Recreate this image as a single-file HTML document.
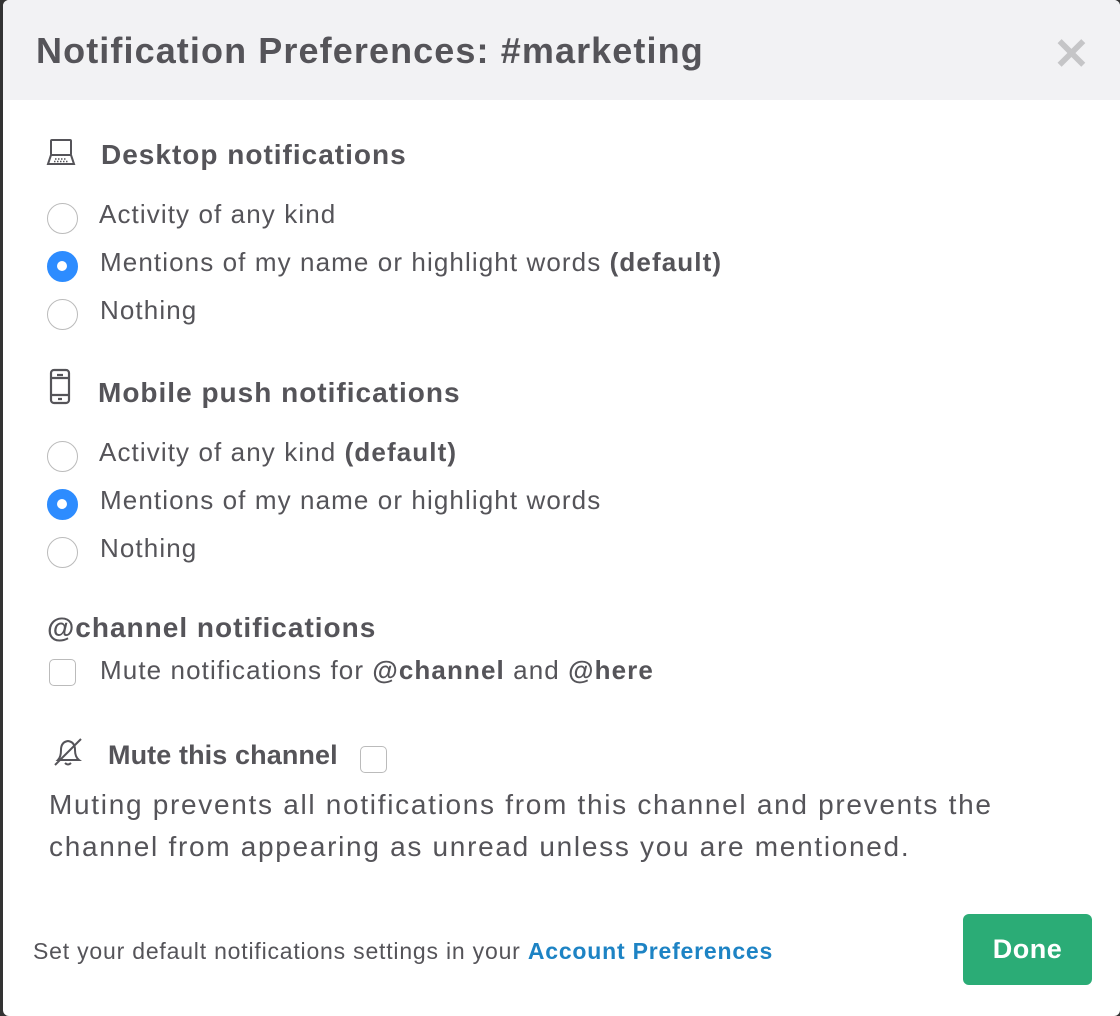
<!DOCTYPE html>
<html><head><style>
*{margin:0;padding:0;box-sizing:border-box}
body{width:1120px;height:1016px;background:#333;font-family:"Liberation Sans",sans-serif;color:#555459;overflow:hidden;position:relative}
.m{position:absolute;left:3px;top:0;width:1117px;height:1016px;background:#fff;border-radius:6px;overflow:hidden}
.hd{height:100px;background:#f2f2f4;position:relative}
.hd h1{position:absolute;left:33px;top:30px;font-size:36px;font-weight:bold;color:#555459;letter-spacing:1.1px}
.x{position:absolute;left:1050px;top:29px;font-size:44px;color:#c5c5c7;font-weight:bold}
.a{position:absolute;white-space:nowrap}
.h2{font-size:28px;font-weight:bold;letter-spacing:1px}
.t{font-size:26px;letter-spacing:1.1px}
.r{position:absolute;width:31px;height:31px;border-radius:50%;border:1.5px solid #bbb;background:#fff}
.r.on{background:#2d8cff;border-color:#2d8cff}
.r.on::after{content:"";position:absolute;left:9px;top:9px;width:10px;height:10px;border-radius:50%;background:#fff}
.c{position:absolute;width:27px;height:27px;border:1.5px solid #bbb;border-radius:5px;background:#fff}
.btn{position:absolute;left:960px;top:914px;width:129px;height:71px;background:#2bac76;border-radius:6px;color:#fff;font-weight:bold;font-size:27px;text-align:center;line-height:71px;letter-spacing:0.5px}
</style></head><body>
<div class="m">
<div class="hd"><h1>Notification Preferences: #marketing</h1><div class="x">✕</div></div>
<svg class="a" style="left:43px;top:138px" width="30" height="30" viewBox="0 0 30 30" fill="none" stroke="#555459" stroke-width="2"><rect x="5" y="2" width="20" height="15" rx="1"/><path d="M5 17 L2 26 H28 L25 17"/><path d="M9 21h12M8 23.5h14" stroke-dasharray="1.5 1.5" stroke-width="1.5"/></svg>
<div class="a h2" style="left:98px;top:139px">Desktop notifications</div>
<div class="r" style="left:44px;top:203px"></div><div class="a t" style="left:96px;top:199px">Activity of any kind</div>
<div class="r on" style="left:44px;top:251px"></div><div class="a t" style="left:97px;top:247px">Mentions of my name or highlight words <b>(default)</b></div>
<div class="r" style="left:44px;top:299px"></div><div class="a t" style="left:97px;top:295px">Nothing</div>
<svg class="a" style="left:45px;top:368px" width="24" height="38" viewBox="0 0 24 38" fill="none" stroke="#555459" stroke-width="2.2"><rect x="3" y="2" width="18" height="33" rx="3"/><path d="M9 7h6M3 10h18M3 27h18M10 31h4"/></svg>
<div class="a h2" style="left:95px;top:377px">Mobile push notifications</div>
<div class="r" style="left:44px;top:441px"></div><div class="a t" style="left:96px;top:437px">Activity of any kind <b>(default)</b></div>
<div class="r on" style="left:44px;top:489px"></div><div class="a t" style="left:97px;top:485px">Mentions of my name or highlight words</div>
<div class="r" style="left:44px;top:537px"></div><div class="a t" style="left:97px;top:533px">Nothing</div>
<div class="a h2" style="left:44px;top:612px">@channel notifications</div>
<div class="c" style="left:46px;top:659px"></div><div class="a t" style="left:97px;top:655px">Mute notifications for <b>@channel</b> and <b>@here</b></div>
<svg class="a" style="left:48px;top:735px" width="34" height="34" viewBox="0 0 34 34" fill="none" stroke="#555459" stroke-width="2"><path d="M7 25 Q10 22 10 15 Q10 7 17 6 Q24 7 24 15 Q24 22 28 25 Z"/><path d="M14 28 Q17 31 20 28"/><path d="M4 30 L30 4"/></svg>
<div class="a h2" style="left:105px;top:740px;font-size:27px;letter-spacing:0.1px">Mute this channel</div>
<div class="c" style="left:357px;top:746px"></div>
<div class="a" style="left:46px;top:784px;font-size:28px;line-height:42px;color:#555459;letter-spacing:1.7px">Muting prevents all notifications from this channel and prevents the<br>channel from appearing as unread unless you are mentioned.</div>
<div class="a" style="left:30px;top:938px;font-size:23px;letter-spacing:0.8px">Set your default notifications settings in your <b style="color:#1d83c4">Account Preferences</b></div>
<div class="btn">Done</div>
</div>
</body></html>
